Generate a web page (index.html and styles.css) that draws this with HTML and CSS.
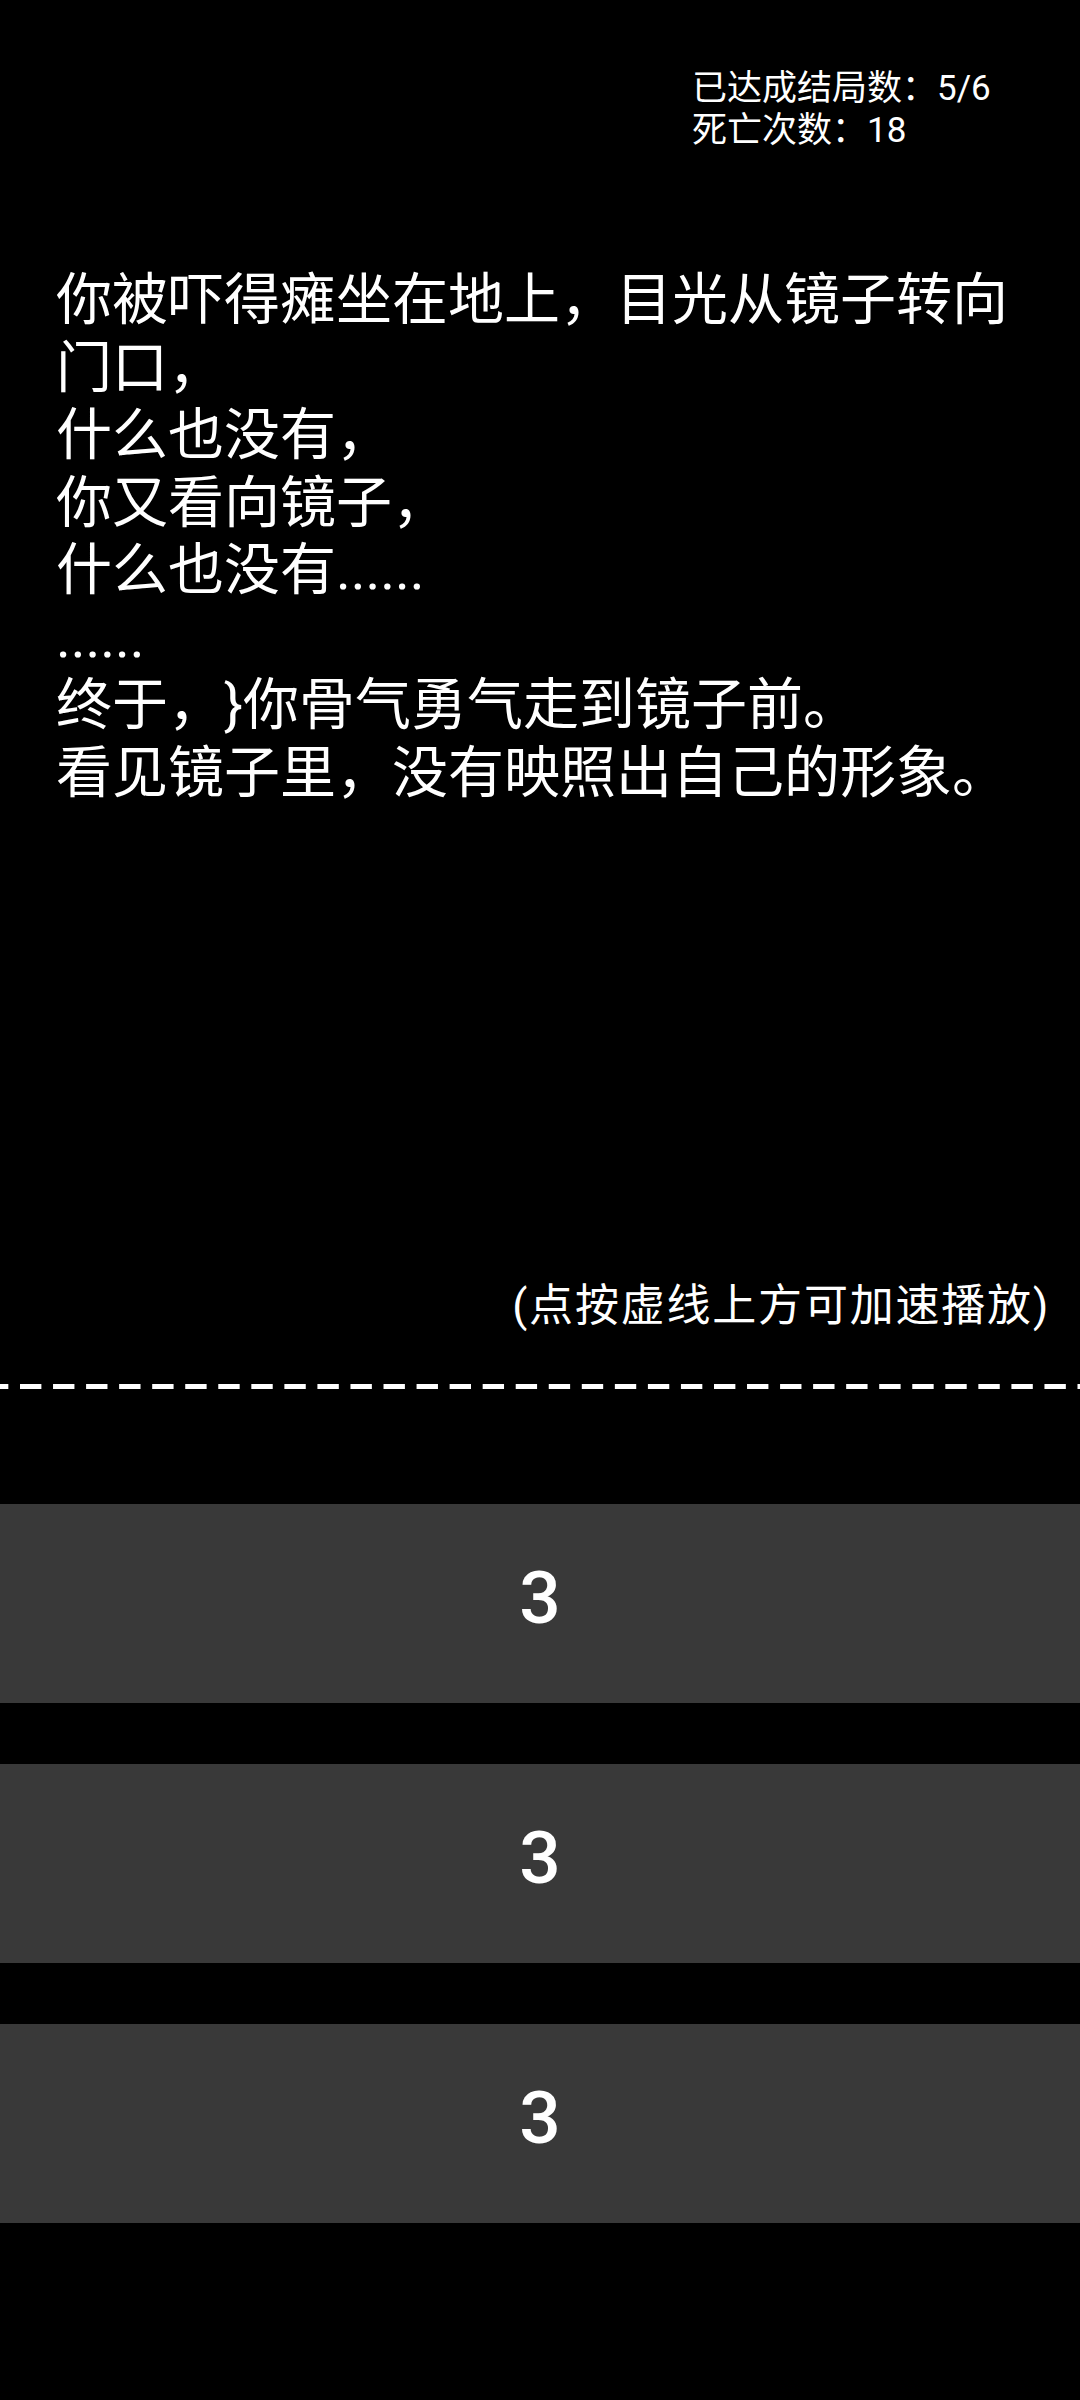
FILE: index.html
```html
<!DOCTYPE html>
<html lang="zh-CN">
<head>
<meta charset="utf-8">
<title>结局</title>
<link rel="stylesheet" href="styles.css">
</head>
<body>
<div class="screen">
  <div class="stats">
    <div class="stat-line">已达成结局数：5/6</div>
    <div class="stat-line">死亡次数：18</div>
  </div>
  <div class="story">
    <p class="story-text">你被吓得瘫坐在地上，目光从镜子转向门口，<br>什么也没有，<br>你又看向镜子，<br>什么也没有......<br>......<br>终于，}你骨气勇气走到镜子前。<br>看见镜子里，没有映照出自己的形象。</p>
  </div>
  <div class="hint">(点按虚线上方可加速播放)</div>
  <div class="divider"></div>
  <div class="choices">
    <div class="choice">3</div>
    <div class="choice">3</div>
    <div class="choice">3</div>
  </div>
</div>
</body>
</html>
```

FILE: styles.css
```css
html, body {
  margin: 0;
  padding: 0;
  background: #000;
}

body {
  font-family: Roboto, "Noto Sans CJK SC", sans-serif;
  color: #fff;
  text-spacing-trim: space-all;
}

.screen {
  width: 1080px;
  height: 2400px;
  display: flex;
  flex-direction: column;
  overflow: hidden;
}

.stats {
  padding-top: 68px;
  padding-left: 692px;
  font-size: 35px;
  line-height: 42px;
}

.story {
  margin-top: 115px;
  padding: 0 56px;
}

.story-text {
  margin: 0;
  font-size: 56px;
  line-height: 67.5px;
}

.hint {
  margin-top: 473px;
  padding-right: 30px;
  text-align: right;
  font-size: 44px;
  line-height: 52.8px;
  letter-spacing: 1.8px;
}

.divider {
  margin-top: 51px;
  height: 5px;
  background-image: linear-gradient(90deg, #fff 21.6px, transparent 21.6px);
  background-size: 33.06px 100%;
  background-position: 20px 0;
  background-repeat: repeat-x;
}

.choices {
  margin-top: 115px;
  display: flex;
  flex-direction: column;
  gap: 61px;
}

.choice {
  height: 199px;
  background: #393939;
  display: flex;
  align-items: center;
  justify-content: center;
  font-size: 73px;
  font-weight: 500;
  line-height: 1;
  padding-bottom: 10px;
  box-sizing: border-box;
}
```
